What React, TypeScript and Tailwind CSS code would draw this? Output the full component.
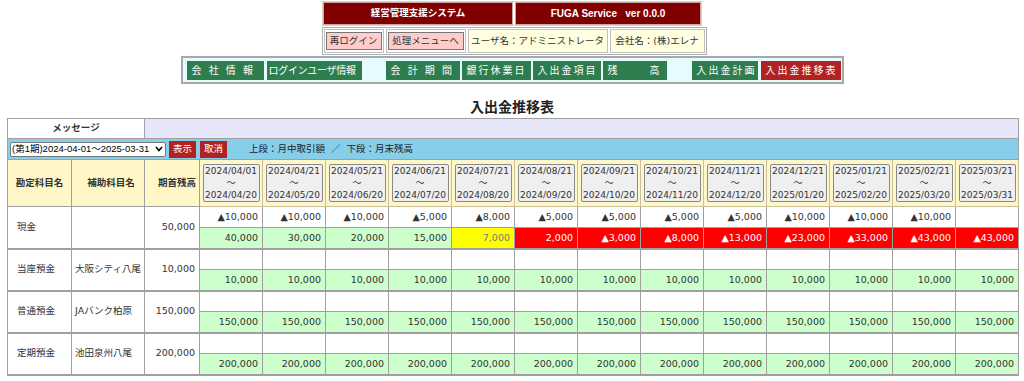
import React from "react";

const periods: [string, string][] = [
  ["2024/04/01", "2024/04/20"],
  ["2024/04/21", "2024/05/20"],
  ["2024/05/21", "2024/06/20"],
  ["2024/06/21", "2024/07/20"],
  ["2024/07/21", "2024/08/20"],
  ["2024/08/21", "2024/09/20"],
  ["2024/09/21", "2024/10/20"],
  ["2024/10/21", "2024/11/20"],
  ["2024/11/21", "2024/12/20"],
  ["2024/12/21", "2025/01/20"],
  ["2025/01/21", "2025/02/20"],
  ["2025/02/21", "2025/03/20"],
  ["2025/03/21", "2025/03/31"],
];

type Tone = "g" | "y" | "r";
type Cell = { v: string; c: Tone };

const cashTop = [
  "▲10,000", "▲10,000", "▲10,000", "▲5,000", "▲8,000", "▲5,000", "▲5,000",
  "▲5,000", "▲5,000", "▲10,000", "▲10,000", "▲10,000", "",
];
const cashBottom: Cell[] = [
  { v: "40,000", c: "g" },
  { v: "30,000", c: "g" },
  { v: "20,000", c: "g" },
  { v: "15,000", c: "g" },
  { v: "7,000", c: "y" },
  { v: "2,000", c: "r" },
  { v: "▲3,000", c: "r" },
  { v: "▲8,000", c: "r" },
  { v: "▲13,000", c: "r" },
  { v: "▲23,000", c: "r" },
  { v: "▲33,000", c: "r" },
  { v: "▲43,000", c: "r" },
  { v: "▲43,000", c: "r" },
];

const flat = (v: string): Cell[] => Array.from({ length: 13 }, () => ({ v, c: "g" as Tone }));
const empty = Array.from({ length: 13 }, () => "");

const accounts = [
  { name: "現金", sub: "", open: "50,000", top: cashTop, bottom: cashBottom },
  { name: "当座預金", sub: "大阪シティ八尾", open: "10,000", top: empty, bottom: flat("10,000") },
  { name: "普通預金", sub: "JAバンク柏原", open: "150,000", top: empty, bottom: flat("150,000") },
  { name: "定期預金", sub: "池田泉州八尾", open: "200,000", top: empty, bottom: flat("200,000") },
];

const toneClass = (c: Tone) =>
  c === "g"
    ? "bg-[#ccffcc] text-[#333]"
    : c === "y"
    ? "bg-[#ffff00] text-[#777]"
    : "bg-[#ff0000] text-white";

function NavBtn({
  w,
  red,
  tight,
  children,
  className = "",
}: {
  w: string;
  red?: boolean;
  tight?: boolean;
  children: React.ReactNode;
  className?: string;
}) {
  return (
    <div
      className={`${w} h-[19px] flex items-center text-white text-[10px] whitespace-nowrap overflow-hidden ${
        tight ? "px-[2px] tracking-[-0.3px]" : "px-[5px] tracking-[2px]"
      } ${red ? "bg-[#b22222]" : "bg-[#2e7d4f]"} ${className}`}
    >
      {children}
    </div>
  );
}

export default function App() {
  return (
    <div className="w-[1024px] min-h-[381px] bg-white text-[#333] text-[9.5px] font-['DejaVu_Sans','Noto_Sans_CJK_JP',sans-serif]">
      <div className="flex flex-col items-center pt-[1px]">
        {/* Title bar */}
        <div className="flex gap-[2px] border border-[#e0d0c8]">
          <div className="w-[190px] h-[23px] bg-[#800000] border border-[#c8a8a0] flex items-center justify-center text-white font-bold">
            経営管理支援システム
          </div>
          <div className="w-[186px] h-[23px] bg-[#800000] border border-[#c8a8a0] flex items-center justify-center text-white font-bold text-[10px] font-['Liberation_Sans',sans-serif]">
            FUGA Service&nbsp;&nbsp;&nbsp;ver 0.0.0
          </div>
        </div>

        {/* User row */}
        <div className="mt-[1px] flex gap-[2px] border border-[#b0b0b0] p-[1px] ml-[4px]">
          <div className="w-[60px] h-[24px] border border-[#c0c0c0] flex items-center justify-center">
            <div className="w-[56px] h-[18px] bg-[#ffcccc] border border-[#777] flex items-center justify-center">再ログイン</div>
          </div>
          <div className="w-[80px] h-[24px] border border-[#c0c0c0] flex items-center justify-center">
            <div className="w-[76px] h-[18px] bg-[#ffcccc] border border-[#777] flex items-center justify-center">処理メニューへ</div>
          </div>
          <div className="w-[140px] h-[24px] border border-[#c0c0c0] bg-[#ffffe0] flex items-center justify-center whitespace-nowrap">
            ユーザ名：アドミニストレータ
          </div>
          <div className="w-[95px] h-[24px] border border-[#c0c0c0] bg-[#ffffe0] flex items-center justify-center whitespace-nowrap">
            会社名：(株)エレナ
          </div>
        </div>

        {/* Nav bar */}
        <div className="mt-[1px] w-[663px] h-[28px] border-2 border-[#a8a8a8] bg-[#e6fbff] flex items-center pl-[4px]">
          <NavBtn w="w-[77px]">会 社 情 報</NavBtn>
          <NavBtn w="w-[95px] ml-[3px]" tight>
            ログインユーザ情報
          </NavBtn>
          <NavBtn w="w-[74px] ml-[24px]">会 計 期 間</NavBtn>
          <NavBtn w="w-[69px] ml-[2px]">銀行休業日</NavBtn>
          <NavBtn w="w-[68px] ml-[2px]">入出金項目</NavBtn>
          <NavBtn w="w-[64px] ml-[2px]" className="justify-between">
            <span>残</span>
            <span>高</span>
          </NavBtn>
          <NavBtn w="w-[66px] ml-[25px]">入出金計画</NavBtn>
          <NavBtn w="w-[80px] ml-[3px]" red>
            入出金推移表
          </NavBtn>
        </div>
      </div>

      <div className="mt-[13px] mb-[1px] text-center font-bold text-[14px] leading-[20px] text-[#222]">入出金推移表</div>

      <table className="ml-[7px] border-collapse table-fixed w-[1012px] border border-[#a0a0a0]">
        <colgroup>
          <col className="w-[64px]" />
          <col className="w-[73px]" />
          <col className="w-[55px]" />
          {periods.map((_, i) => (
            <col key={i} />
          ))}
        </colgroup>
        <tbody>
          <tr className="h-[20px]">
            <td colSpan={2} className="bg-white border border-[#a0a0a0] text-center font-bold">
              メッセージ
            </td>
            <td colSpan={14} className="bg-[#e6e6fa] border border-[#a0a0a0]"></td>
          </tr>
          <tr className="h-[21px]">
            <td colSpan={16} className="bg-[#87ceeb] border border-[#a0a0a0] p-0">
              <div className="flex items-center pl-[2px]">
                <div className="w-[156px] h-[15px] bg-white border border-[#777] rounded-[2px] flex items-center justify-between pl-[1px] pr-[2px] text-[9.5px] text-black whitespace-nowrap overflow-hidden font-['Liberation_Sans','Noto_Sans_CJK_JP',sans-serif]">
                  <span>(第1期)2024-04-01～2025-03-31</span>
                  <svg width="8" height="6" viewBox="0 0 8 6" className="shrink-0">
                    <polyline points="1,1 4,4.5 7,1" fill="none" stroke="#000" strokeWidth="1.6" />
                  </svg>
                </div>
                <div className="ml-[3px] w-[27px] h-[17px] bg-[#b22222] text-white flex items-center justify-center">表示</div>
                <div className="ml-[4px] w-[27px] h-[17px] bg-[#b22222] text-white flex items-center justify-center">取消</div>
                <div className="ml-[22px] text-[#222]">上段：月中取引額&nbsp;&nbsp;／&nbsp;&nbsp;下段：月末残高</div>
              </div>
            </td>
          </tr>
          <tr className="h-[47px] bg-[#fff7c8]">
            <td className="border border-[#a0a0a0] text-center font-bold">勘定科目名</td>
            <td className="border border-[#a0a0a0] text-center font-bold pl-[6px]">補助科目名</td>
            <td className="border border-[#a0a0a0] text-right font-bold pr-[3px]">期首残高</td>
            {periods.map(([a, b], i) => (
              <td key={i} className="border border-[#c8c0a0] p-0">
                <div className="mx-auto w-[57px] h-[38px] bg-[#efefef] border border-[#8a8a8a] rounded-[2px] flex flex-col items-center justify-center text-[9px] leading-[12px] text-[#333]">
                  <span>{a}</span>
                  <span>～</span>
                  <span>{b}</span>
                </div>
              </td>
            ))}
          </tr>
          {accounts.map((acc, ai) => (
            <React.Fragment key={ai}>
              <tr className="h-[21px]">
                <td rowSpan={2} className="border border-[#a0a0a0] border-b-2 pl-[9px] align-middle">
                  {acc.name}
                </td>
                <td rowSpan={2} className="border border-[#a0a0a0] border-b-2 pl-[3px] align-middle whitespace-nowrap">
                  {acc.sub}
                </td>
                <td rowSpan={2} className="border border-[#a0a0a0] border-b-2 pr-[4px] text-right align-middle">
                  {acc.open}
                </td>
                {acc.top.map((v, i) => (
                  <td key={i} className="border border-[#a0a0a0] text-right pr-[4px] bg-white">
                    {v}
                  </td>
                ))}
              </tr>
              <tr className="h-[21px]">
                {acc.bottom.map((cell, i) => (
                  <td key={i} className={`border border-[#a0a0a0] border-b-2 text-right pr-[4px] ${toneClass(cell.c)}`}>
                    {cell.v}
                  </td>
                ))}
              </tr>
            </React.Fragment>
          ))}
        </tbody>
      </table>
    </div>
  );
}
